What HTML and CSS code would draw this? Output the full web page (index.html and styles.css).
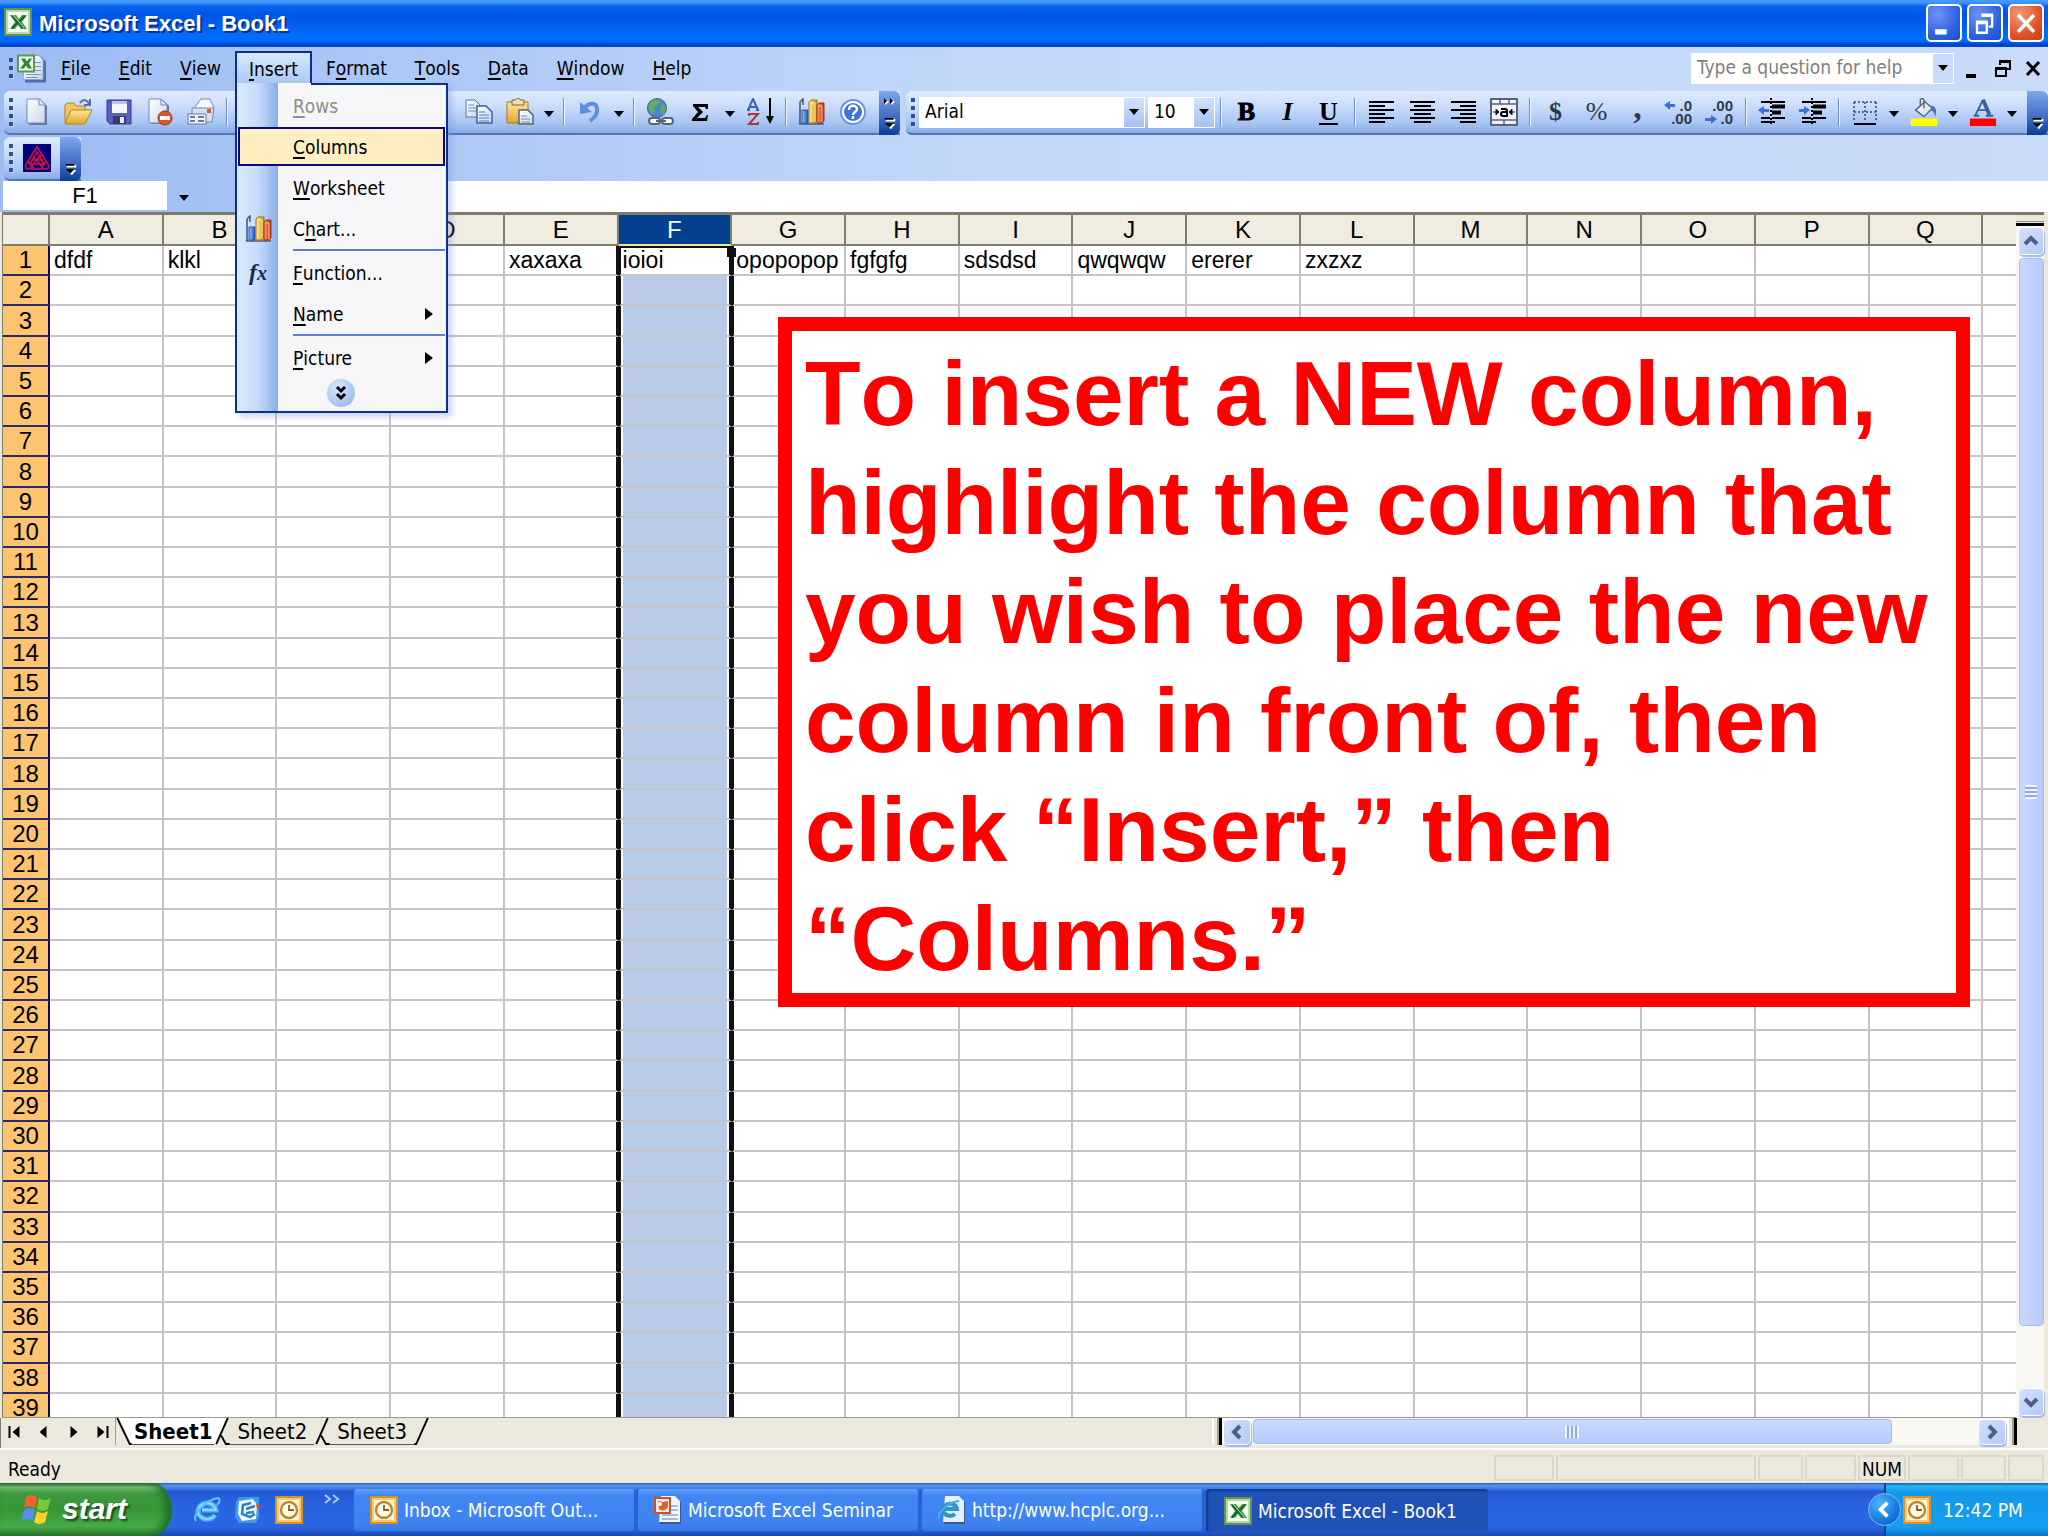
FILE: index.html
```html
<!DOCTYPE html>
<html lang="en">
<head>
    <meta charset="UTF-8">
    <meta name="viewport" content="width=device-width, initial-scale=1.0">
    <title>Microsoft Excel - Book1</title>
    <link rel="stylesheet" href="styles.css">
</head>
<body>
    <!-- shared icons -->
    <svg class="defs" width="0" height="0" aria-hidden="true">
        <defs>
            <linearGradient id="blueBar" x1="0" x2="1"><stop offset="0" stop-color="#9cc4ff"/><stop offset="1" stop-color="#1d50c8"/></linearGradient>
            <linearGradient id="goldBar" x1="0" x2="1"><stop offset="0" stop-color="#fff0a0"/><stop offset="1" stop-color="#d79a10"/></linearGradient>
            <linearGradient id="redBar" x1="0" x2="1"><stop offset="0" stop-color="#ff9a78"/><stop offset="1" stop-color="#c02c08"/></linearGradient>
            <linearGradient id="paper" x1="0" y1="0" x2="1" y2="1"><stop offset="0" stop-color="#fff"/><stop offset="1" stop-color="#c9d6ea"/></linearGradient>
            <linearGradient id="folder" x1="0" y1="0" x2="0" y2="1"><stop offset="0" stop-color="#ffe79a"/><stop offset="1" stop-color="#e2a52e"/></linearGradient>
        </defs>
        <symbol id="excel" viewBox="0 0 28 28">
            <rect x="1" y="1" width="26" height="26" fill="#f4fbf0" stroke="#5f9550" stroke-width="2"/>
            <rect x="3" y="3" width="22" height="22" fill="none" stroke="#b9d8ac" stroke-width="2"/>
            <path d="M6 7h6l3 4 3-4h5l-5 7 5 7h-6l-3-4-3 4H6l5-7z" fill="#3c9a45"/>
            <path d="M8 8l11 12M21 8L8 20" stroke="#12561d" stroke-width="1.5"/>
            <path d="M9 7l11 13" stroke="#bfe3b4" stroke-width="1"/>
        </symbol>
        <symbol id="chart" viewBox="0 0 28 28">
            <path d="M2 4v22h24M2 26l-1-1M2 4l3-3v6" fill="none" stroke="#4a5a7c" stroke-width="1.6"/>
            <path d="M4 12h6v13H4z" fill="url(#blueBar)" stroke="#2b52a8"/>
            <path d="M11 4l2-2h6v20l-2 3h-6z" fill="url(#goldBar)" stroke="#9c7416"/>
            <path d="M19 7l2-2h5v18l-2 2h-5z" fill="url(#redBar)" stroke="#a0300f"/>
            <path d="M12 5h5v19M20 8h4v16" fill="none" stroke="#ffe9b0" opacity=".7"/>
        </symbol>
        <symbol id="clock" viewBox="0 0 28 28">
            <rect x="1" y="1" width="26" height="26" fill="#fff3d2" stroke="#d9902a" stroke-width="2"/>
            <rect x="3" y="3" width="22" height="22" fill="none" stroke="#fbc86b" stroke-width="2"/>
            <circle cx="14" cy="14" r="8" fill="#fffbe9" stroke="#b98433" stroke-width="2.4"/>
            <path d="M14 9v5h5" fill="none" stroke="#8a6020" stroke-width="1.8"/>
        </symbol>
        <symbol id="ie" viewBox="0 0 28 28">
            <path d="M22 19a9 8 0 1 1 1-5H9" fill="none" stroke="#4fb6f5" stroke-width="5"/>
            <path d="M22 19a9 8 0 1 1 1-5H9" fill="none" stroke="#a7e0ff" stroke-width="1.4"/>
            <path d="M3 25C-1 19 12 4 25 2c3 1 1 5-1 7" fill="none" stroke="#5cc0fa" stroke-width="2.2"/>
        </symbol>
        <symbol id="more" viewBox="0 0 14 16">
            <path d="M2 2h11v3H2zM2 8h11l-5 6z" fill="#fff"/>
            <path d="M1 1h10v2H1zM1 7h10l-5 5z" fill="#000"/>
        </symbol>
    </svg>

    <header class="title-bar">
        <svg class="app-icon"><use href="#excel"/></svg>
        <h1>Microsoft Excel - Book1</h1>
        <div class="window-buttons">
            <button type="button" aria-label="Minimize"><svg viewBox="0 0 36 40"><path d="M8 27h13v6H8z" fill="#fff"/></svg></button>
            <button type="button" aria-label="Restore"><svg viewBox="0 0 36 40"><path d="M14 12h12v12h-4M14 10.500h13" fill="none" stroke="#fff" stroke-width="2.600"/><path d="M9 20h11v11H9zM8 18.500h13" fill="none" stroke="#fff" stroke-width="2.600"/></svg></button>
            <button type="button" class="close" aria-label="Close"><svg viewBox="0 0 36 40"><path d="M9 11l18 19M27 11L9 30" stroke="#fff" stroke-width="4"/></svg></button>
        </div>
    </header>

    <div class="bars">
        <nav class="menu-bar">
            <span class="grip short"></span>
            <svg class="doc-icon" viewBox="0 0 30 28">
                <path d="M10 2h14l5 5v21H8V10z" fill="#4d6ca8"/>
                <path d="M8 1h14l4 4v20H6z" fill="url(#paper)" stroke="#8ba3cf"/>
                <path d="M18 8h6M18 12h6M9 20h15M9 16h15M9 23h12" stroke="#7c97cd"/>
                <rect x="1" y="1" width="16" height="16" fill="#f1faed" stroke="#5f9550" stroke-width="2"/>
                <path d="M4 4h4l2 3 2-3h3l-3 5 3 5h-4l-2-3-2 3H3l4-5z" fill="#2f8a3a"/>
            </svg>
            <button type="button"><u>F</u>ile</button>
            <button type="button"><u>E</u>dit</button>
            <button type="button"><u>V</u>iew</button>
            <div class="menu-open">
                <button type="button" aria-expanded="true"><u>I</u>nsert</button>
                <ul class="dropdown">
                    <li><button type="button" disabled><u>R</u>ows</button></li>
                    <li><button type="button" class="active"><u>C</u>olumns</button></li>
                    <li><button type="button"><u>W</u>orksheet</button></li>
                    <li><button type="button"><svg class="item-icon"><use href="#chart"/></svg>C<u>h</u>art...</button></li>
                    <li class="divided"><button type="button"><span class="item-icon fx"><i>f</i><i>x</i></span><u>F</u>unction...</button></li>
                    <li><button type="button"><u>N</u>ame<span class="sub"></span></button></li>
                    <li class="divided"><button type="button"><u>P</u>icture<span class="sub"></span></button></li>
                    <li class="expand"><button type="button" aria-label="Show full menu"><svg viewBox="0 0 28 28"><path d="M10 8l4 4 4-4M10 15l4 4 4-4" fill="none" stroke="#000" stroke-width="3"/></svg></button></li>
                </ul>
            </div>
            <button type="button">F<u>o</u>rmat</button>
            <button type="button"><u>T</u>ools</button>
            <button type="button"><u>D</u>ata</button>
            <button type="button"><u>W</u>indow</button>
            <button type="button"><u>H</u>elp</button>
            <div class="combo help-box">
                <input type="text" placeholder="Type a question for help" aria-label="Type a question for help">
                <span class="combo-arrow"></span>
            </div>
            <div class="doc-buttons">
                <button type="button" aria-label="Minimize workbook"><svg viewBox="0 0 16 20"><path d="M1 16h10v4H1z"/></svg></button>
                <button type="button" aria-label="Restore workbook"><svg viewBox="0 0 16 20"><path d="M5 7V3h10v8h-4M5 4h10M1 10h10v8H1zM1 11h10" fill="none" stroke="#000" stroke-width="2"/></svg></button>
                <button type="button" aria-label="Close workbook"><svg viewBox="0 0 16 20"><path d="M2 4l12 13M14 4L2 17" stroke="#000" stroke-width="3"/></svg></button>
            </div>
        </nav>

        <div class="toolbar-row">
            <div class="toolbar standard">
                <span class="grip"></span>
                <button type="button" class="tool" aria-label="New"><svg viewBox="0 0 28 28"><path d="M6 2h12l6 6v19H6z" fill="#5f78a8"/><path d="M4 1h13l5 6v18H4z" fill="url(#paper)" stroke="#7489b4"/><path d="M16 1v6h6" fill="#dbe5f5" stroke="#7489b4"/></svg></button>
                <button type="button" class="tool" aria-label="Open"><svg viewBox="0 0 28 28"><path d="M1 25V7l2-2h7l2 3h9v5" fill="#f1c561" stroke="#b08323"/><path d="M1 26l6-14h21l-7 14z" fill="url(#folder)" stroke="#b08323"/><path d="M16 5c3-4 7-4 9 1M26 1v6h-6" fill="none" stroke="#55729f" stroke-width="2"/></svg></button>
                <button type="button" class="tool" aria-label="Save"><svg viewBox="0 0 28 28"><path d="M2 2h24v24H5l-3-3z" fill="#5a5fc0" stroke="#353a90"/><path d="M7 3h15v12H7z" fill="#f3f6ff"/><path d="M7 3h15v3H7z" fill="#b9c3ee"/><path d="M8 18h13v8H8z" fill="#34396f"/><path d="M15 19h4v6h-4z" fill="#e8ecff"/></svg></button>
                <button type="button" class="tool" aria-label="Permission"><svg viewBox="0 0 28 28"><path d="M5 2h12l6 6v18H5z" fill="#5f78a8"/><path d="M3 1h12l6 6v18H3z" fill="url(#paper)" stroke="#7489b4"/><path d="M15 1v6h6" fill="none" stroke="#7489b4"/><circle cx="19" cy="20" r="7" fill="#e2542c" stroke="#a8330f"/><path d="M14 18h10v4H14z" fill="#fff"/></svg></button>
                <button type="button" class="tool" aria-label="Print"><svg viewBox="0 0 28 28"><path d="M8 9l6-8h9l4 9" fill="#f6f9ff" stroke="#7489b4"/><path d="M5 10h22l-2 14H5z" fill="#d5dff0" stroke="#7489b4"/><path d="M20 11h4v4h-4z" fill="#e2542c"/><path d="M1 16h18v10H1z" fill="#f3f6fc" stroke="#5f78a8"/><path d="M3 19h5M3 23h5M11 19h6M11 23h6" stroke="#5f78a8" stroke-width="2"/></svg></button>
                <span class="sep"></span>
                <span class="stretch"></span>
                <button type="button" class="tool" aria-label="Copy"><svg viewBox="0 0 28 28"><path d="M1 2h9l5 5v12H1z" fill="url(#paper)" stroke="#5675b5"/><path d="M3 7h6M3 10h9M3 13h9" stroke="#6f90d0"/><path d="M12 8h9l6 6v11H12z" fill="url(#paper)" stroke="#3f5fa8" stroke-width="1.500"/><path d="M14 14h6M14 17h10M14 20h10M14 23h10" stroke="#5679c8"/></svg></button>
                <button type="button" class="tool" aria-label="Paste"><svg viewBox="0 0 28 28"><path d="M1 4h21v21H1z" fill="url(#folder)" stroke="#a1751b"/><path d="M6 2h3l3-2 3 2h3v5H6z" fill="#e9ddb0" stroke="#7d6a35"/><path d="M13 12h9l5 5v9H13z" fill="url(#paper)" stroke="#59647c" stroke-width="1.500"/><path d="M15 18h6M15 21h9M15 24h9" stroke="#7f8aa5"/></svg></button>
                <button type="button" class="arrow" aria-label="Paste options"></button>
                <span class="sep"></span>
                <button type="button" class="tool" aria-label="Undo"><svg viewBox="0 0 28 28"><path d="M9 9c5-5 11-4 12 1 1 6-2 9-7 13" fill="none" stroke="#5f8de0" stroke-width="4"/><path d="M4 4v12l12-2z" fill="#5f8de0"/></svg></button>
                <button type="button" class="arrow" aria-label="Undo list"></button>
                <span class="sep"></span>
                <button type="button" class="tool" aria-label="Insert Hyperlink"><svg viewBox="0 0 28 28"><circle cx="11" cy="10" r="9.500" fill="#4a85d8" stroke="#40608f"/><path d="M4 5c4-5 9-4 10-2l-3 5-4 1 2 5-3 2C2 13 2 8 4 5zM16 6l4 3-2 8-4-3z" fill="#62b04a"/><rect x="3" y="20" width="11" height="6" rx="3" fill="#fff" stroke="#596577" stroke-width="2"/><rect x="16" y="20" width="11" height="6" rx="3" fill="#fff" stroke="#596577" stroke-width="2"/><path d="M10 23h10" stroke="#596577" stroke-width="2"/></svg></button>
                <button type="button" class="tool" aria-label="AutoSum"><svg viewBox="0 0 28 28"><path d="M6 6h15v5h-2l-1-2h-7l5 5-6 6h8l2-3h1l-1 6H5v-2l6-7-5-6z"/></svg></button>
                <button type="button" class="arrow" aria-label="Functions"></button>
                <button type="button" class="tool" aria-label="Sort Ascending"><svg viewBox="0 0 28 28"><path d="M2 12L7 1l5 11M4 9h6M1 12h3M10 12h3" fill="none" stroke="#3c62b4" stroke-width="2"/><path d="M3 18v-2h9L3 26h9v-2" fill="none" stroke="#a83a3a" stroke-width="2"/><path d="M24 0v24" stroke="#000" stroke-width="2"/><path d="M20 18h8l-4 8z"/></svg></button>
                <span class="sep"></span>
                <button type="button" class="tool" aria-label="Chart Wizard"><svg><use href="#chart"/></svg></button>
                <button type="button" class="tool" aria-label="Help"><svg viewBox="0 0 28 28"><circle cx="14" cy="14" r="12" fill="#fff" stroke="#6b93dd" stroke-width="2"/><circle cx="14" cy="14" r="9" fill="#3b73dc"/><path d="M10 12c0-6 8-5 8-1 0 3-4 3-4 6M14 18v3" fill="none" stroke="#fff" stroke-width="2.500"/></svg></button>
                <button type="button" class="overflow" aria-label="More buttons"><svg class="push" viewBox="0 0 14 10"><path d="M2 1l4 3-4 3zM8 1l4 3-4 3z" fill="#fff"/><path d="M1 0l3 3-3 3zM7 0l3 3-3 3z"/></svg><svg><use href="#more"/></svg></button>
            </div>

            <div class="toolbar formatting">
                <span class="grip"></span>
                <div class="combo font-name">
                    <select aria-label="Font"><option>Arial</option></select>
                    <span class="combo-arrow"></span>
                </div>
                <div class="combo font-size">
                    <select aria-label="Font Size"><option>10</option></select>
                    <span class="combo-arrow"></span>
                </div>
                <span class="sep"></span>
                <button type="button" class="tool letter"><b>B</b></button>
                <button type="button" class="tool letter"><i>I</i></button>
                <button type="button" class="tool letter"><u>U</u></button>
                <span class="sep"></span>
                <button type="button" class="tool" aria-label="Align Left"><svg viewBox="0 0 28 28"><path d="M2 4h25M2 8h16M2 12h25M2 16h16M2 20h25M2 24h16" stroke="#000" stroke-width="2"/></svg></button>
                <button type="button" class="tool" aria-label="Center"><svg viewBox="0 0 28 28"><path d="M2 4h25M6 8h17M2 12h25M6 16h17M2 20h25M6 24h17" stroke="#000" stroke-width="2"/></svg></button>
                <button type="button" class="tool" aria-label="Align Right"><svg viewBox="0 0 28 28"><path d="M2 4h25M11 8h16M2 12h25M11 16h16M2 20h25M11 24h16" stroke="#000" stroke-width="2"/></svg></button>
                <button type="button" class="tool merge" aria-label="Merge and Center"><svg viewBox="0 0 28 28"><path d="M1 1h26v26H1z" fill="#eef3fb" stroke="#59647c" stroke-width="2"/><path d="M1 6h26M1 22h26M10 1v5M19 1v5M14 22v5" stroke="#59647c" stroke-width="1.500"/><path d="M3 14h5M20 14h5M6 11l3 3-3 3zM22 11l-3 3 3 3z" stroke="#222"/><path d="M11 11h4q2 0 2 2v5h-4q-2 0-2-2t2-2h4" fill="none" stroke="#000" stroke-width="2"/></svg></button>
                <span class="sep"></span>
                <button type="button" class="tool letter soft"><b>$</b></button>
                <button type="button" class="tool letter soft">%</button>
                <button type="button" class="tool letter soft comma"><b>,</b></button>
                <button type="button" class="tool decimals" aria-label="Increase Decimal"><svg viewBox="0 0 28 28"><path d="M0 7l6-4v3h5v3H6v3z" fill="#3f70d0"/></svg><span>.0</span><span>.00</span></button>
                <button type="button" class="tool decimals" aria-label="Decrease Decimal"><svg viewBox="0 0 28 28"><path d="M12 21l-6-4v3H0v3h6v3z" fill="#3f70d0"/></svg><span>.00</span><span>.0</span></button>
                <span class="sep"></span>
                <button type="button" class="tool" aria-label="Decrease Indent"><svg viewBox="0 0 28 28"><path d="M3 4h24M3 20h9M14 20h13M3 24h14" stroke="#000" stroke-width="2"/><path d="M14 8.500h13M14 14.500h9" stroke="#000" stroke-width="4"/><path d="M13 0v28" stroke="#000" stroke-width="2" stroke-dasharray="2 2"/><path d="M0 12l6-4v3h5v3H6v3z" fill="#3f70d0"/></svg></button>
                <button type="button" class="tool" aria-label="Increase Indent"><svg viewBox="0 0 28 28"><path d="M3 4h24M3 20h9M14 20h13M3 24h14" stroke="#000" stroke-width="2"/><path d="M14 8.500h13M14 14.500h9" stroke="#000" stroke-width="4"/><path d="M13 0v28" stroke="#000" stroke-width="2" stroke-dasharray="2 2"/><path d="M11 12L5 8v3H0v3h5v3z" fill="#3f70d0"/></svg></button>
                <span class="sep"></span>
                <button type="button" class="tool" aria-label="Borders"><svg viewBox="0 0 28 28"><path d="M3 4h22M3 14h22M3 4v20M14 4v20M25 4v20" fill="none" stroke="#37486d" stroke-width="1.500" stroke-dasharray="2 2"/><path d="M3 26h22" stroke="#000" stroke-width="2"/></svg></button>
                <button type="button" class="arrow" aria-label="Border styles"></button>
                <button type="button" class="tool" aria-label="Fill Color"><svg viewBox="0 0 28 30"><path d="M22 8c5 1 6 6 4 12-1-5-3-7-6-7z" fill="#4a72c4"/><path d="M5 13L15 4l8 7-9 9z" fill="url(#paper)" stroke="#59647c" stroke-width="1.500"/><path d="M10 8V2q2-3 4 0v9" fill="none" stroke="#59647c" stroke-width="1.500"/><path d="M0 22h28v8H0z" fill="#ff0"/></svg></button>
                <button type="button" class="arrow" aria-label="Fill colors"></button>
                <button type="button" class="tool" aria-label="Font Color"><svg viewBox="0 0 28 30"><path d="M6 18L14 2M4 19h6M17 19h8M9 13h9" fill="none" stroke="#3d5c9e" stroke-width="2"/><path d="M14 2l7 16" stroke="#3d5c9e" stroke-width="4"/><path d="M0 22h28v8H0z" fill="#f00"/></svg></button>
                <button type="button" class="arrow" aria-label="Font colors"></button>
                <button type="button" class="overflow" aria-label="Toolbar options"><svg><use href="#more"/></svg></button>
            </div>
        </div>

        <div class="toolbar-row addins">
            <div class="toolbar">
                <span class="grip"></span>
                <button type="button" class="tool" aria-label="PDF"><svg viewBox="0 0 28 28"><path d="M0 0h28v28H0z" fill="#00007c"/><path d="M14 3L3 20q-2 5 3 5h16q5 0 3-5zM14 8L7 20h14zM10 12l10 12M18 11L7 24M5 17l6 8M23 17l-5 8M8 16h12" fill="none" stroke="#d4103c" stroke-width="1.500"/></svg></button>
                <button type="button" class="overflow" aria-label="Toolbar options"><svg><use href="#more"/></svg></button>
            </div>
        </div>

        <div class="formula-row">
            <input class="name-box" type="text" value="F1" aria-label="Name Box">
            <button type="button" class="arrow" aria-label="Names"></button>
            <input class="formula" type="text" aria-label="Formula Bar">
        </div>
    </div>

    <main class="workbook">
        <div class="pane">
            <table class="sheet" id="sheet">
                <thead><tr id="columns"><th class="corner"></th></tr></thead>
                <tbody id="rows"></tbody>
            </table>
            <p class="callout">To insert a NEW column, highlight the column that you wish to place the new column in front of, then click “Insert,” then “Columns.”</p>
        </div>
        <div class="vscroll">
            <span class="split"></span>
            <button type="button" aria-label="Scroll up"><svg viewBox="0 0 24 26"><path d="M6 16l6-6 6 6" fill="none" stroke="#4d6185" stroke-width="4"/></svg></button>
            <span class="thumb"></span>
            <span class="track"></span>
            <button type="button" aria-label="Scroll down"><svg viewBox="0 0 24 26"><path d="M6 10l6 6 6-6" fill="none" stroke="#4d6185" stroke-width="4"/></svg></button>
        </div>
    </main>

    <div class="sheet-bar">
        <div class="sheet-nav">
            <button type="button" aria-label="First sheet"><svg viewBox="0 0 12 14"><path d="M0 1h2v12H0zM11 1v12L4 7z"/></svg></button>
            <button type="button" aria-label="Previous sheet"><svg viewBox="0 0 12 14"><path d="M9 1v12L2 7z"/></svg></button>
            <button type="button" aria-label="Next sheet"><svg viewBox="0 0 12 14"><path d="M3 1v12l7-6z"/></svg></button>
            <button type="button" aria-label="Last sheet"><svg viewBox="0 0 12 14"><path d="M10 1h2v12h-2zM1 1v12l7-6z"/></svg></button>
        </div>
        <div class="tabs">
            <svg class="slant" viewBox="0 0 16 28"><path d="M0 0h16v27h-2z" fill="#fff"/><path d="M1 0l13 27h2" fill="none" stroke="#000" stroke-width="2"/></svg>
            <button type="button" class="current">Sheet1</button>
            <svg class="slant" viewBox="0 0 16 28"><path d="M0 0h14L2 27H0z" fill="#fff"/><path d="M14 0L2 27M7 18l5 9h4" fill="none" stroke="#000" stroke-width="2"/></svg>
            <button type="button">Sheet2</button>
            <svg class="slant" viewBox="0 0 16 28"><path d="M14 0L2 27M7 18l5 9h4" fill="none" stroke="#000" stroke-width="2"/></svg>
            <button type="button">Sheet3</button>
            <svg class="slant" viewBox="0 0 16 28"><path d="M14 0L2 27H0" fill="none" stroke="#000" stroke-width="2"/></svg>
        </div>
        <span class="tab-split"></span>
        <div class="hscroll">
            <button type="button" aria-label="Scroll left"><svg viewBox="0 0 26 24"><path d="M16 6l-6 6 6 6" fill="none" stroke="#4d6185" stroke-width="4"/></svg></button>
            <span class="thumb"></span>
            <span class="track"></span>
            <button type="button" aria-label="Scroll right"><svg viewBox="0 0 26 24"><path d="M10 6l6 6-6 6" fill="none" stroke="#4d6185" stroke-width="4"/></svg></button>
        </div>
        <span class="tab-split"></span>
    </div>

    <div class="status-bar">
        <span class="message">Ready</span>
        <span class="cell w60"></span>
        <span class="cell w200"></span>
        <span class="cell w44"></span>
        <span class="cell w52"></span>
        <span class="cell w48">NUM</span>
        <span class="cell w52"></span>
        <span class="cell w44"></span>
        <span class="cell w36"></span>
    </div>

    <footer class="taskbar">
        <button type="button" class="start">
            <svg viewBox="0 0 32 32"><path d="M5 4q6-4 11 0l-2 11Q8 11 3 15z" fill="#f0642a"/><path d="M18 5q6 4 12 0l-3 11q-5 4-11 0z" fill="#7cc63a"/><path d="M3 17q5-4 11 0l-3 11q-5-4-11 0z" fill="#5a8cf0"/><path d="M16 18q5 4 11 0l-3 11q-5 4-11 0z" fill="#fbd02c"/></svg>
            start
        </button>
        <div class="quick">
            <button type="button" aria-label="Internet Explorer"><svg><use href="#ie"/></svg></button>
            <button type="button" aria-label="Show Desktop"><svg viewBox="0 0 28 28"><path d="M2 6l3-5h20v20l-3 6H5l-4-6z" fill="#3f9ae8"/><path d="M5 5l14-2 4 6-1 14-14 2-4-7z" fill="#f3faff"/><path d="M17 7l-8 2-1 9 8 3 5-3M12 13l9-3M12 17l8-1" fill="none" stroke="#2c7fd0" stroke-width="2.500"/><path d="M22 8l6 2-5 3z" fill="#e2442c"/></svg></button>
            <button type="button" aria-label="Microsoft Outlook"><svg><use href="#clock"/></svg></button>
            <button type="button" class="quick-more" aria-label="More shortcuts"><svg viewBox="0 0 16 12"><path d="M1 1l5 4-5 4M9 1l5 4-5 4" fill="none" stroke="#a9cdfc" stroke-width="2"/></svg></button>
        </div>
        <div class="tasks">
            <button type="button"><svg><use href="#clock"/></svg>Inbox - Microsoft Out...</button>
            <button type="button"><svg viewBox="0 0 28 28"><path d="M8 1h14l5 5v22H6V8z" fill="#34588f"/><path d="M7 0h14l5 5v21H5z" fill="#f1f6ff"/><path d="M17 10h7M17 14h7M8 19h16M8 23h16" stroke="#8ca9d8" stroke-width="1.500"/><rect x="1" y="2" width="15" height="15" fill="#fbe6da" stroke="#c2542c" stroke-width="2"/><path d="M4 5l5 1 5-1v6q-4 6-9 2z" fill="#d9633a"/><circle cx="6" cy="8" r="2" fill="#fff"/></svg>Microsoft Excel Seminar</button>
            <button type="button"><svg viewBox="0 0 28 28"><path d="M8 1h14l5 5v22H6z" fill="#34588f"/><path d="M7 0h14l5 5v21H5z" fill="#e6effc"/><path d="M17 18a7 6 0 1 1 2-5H6" fill="none" stroke="#2b95cc" stroke-width="4"/><path d="M1 23C-1 18 9 6 21 5" fill="none" stroke="#43aee2" stroke-width="2"/></svg>http://www.hcplc.org...</button>
            <button type="button" class="pressed"><svg><use href="#excel"/></svg>Microsoft Excel - Book1</button>
        </div>
        <div class="tray">
            <button type="button" class="tray-toggle" aria-label="Show hidden icons"><svg viewBox="0 0 32 32"><path d="M19 9l-7 7 7 7" fill="none" stroke="#fff" stroke-width="4"/></svg></button>
            <svg class="tray-icon"><use href="#clock"/></svg>
            <time>12:42 PM</time>
        </div>
    </footer>

    <script src="script.js"></script>
</body>
</html>
```

FILE: script.js
```js
const columns = "ABCDEFGHIJKLMNOPQR".split("");
const selected = "F";
const rowCount = 39;

const firstRow = {
    A: "dfdf",
    B: "klkl",
    E: "xaxaxa",
    F: "ioioi",
    G: "opopopop",
    H: "fgfgfg",
    I: "sdsdsd",
    J: "qwqwqw",
    K: "ererer",
    L: "zxzxz"
};

const head = document.getElementById("columns");
const body = document.getElementById("rows");

columns.forEach(function (name) {
    const th = document.createElement("th");
    th.scope = "col";
    // column R is only partly in view, its letter is scrolled off
    th.textContent = name === "R" ? "" : name;
    if (name === selected) {
        th.className = "selected";
    }
    head.appendChild(th);
});

for (let i = 1; i <= rowCount; i++) {
    const tr = document.createElement("tr");
    const th = document.createElement("th");
    th.scope = "row";
    th.textContent = i;
    tr.appendChild(th);

    columns.forEach(function (name) {
        const td = document.createElement("td");
        if (i === 1 && firstRow[name]) {
            td.textContent = firstRow[name];
        }
        if (name === "E") {
            td.className = "before";
        } else if (name === selected) {
            td.className = "selected";
        } else if (name === "G") {
            td.className = "after";
        }
        tr.appendChild(td);
    });
    body.appendChild(tr);
}
```

FILE: styles.css
```css
* {
    box-sizing: border-box;
}

body {
    display: flex;
    flex-direction: column;
    height: 100vh;
    margin: 0;
    overflow: hidden;
    background: #ece9d8;
    color: #000;
    font-family: "DejaVu Sans Condensed", "DejaVu Sans", sans-serif;
    font-size: 19px;
}

button,
input,
select {
    margin: 0;
    padding: 0;
    border: 0;
    border-radius: 0;
    background: none;
    color: inherit;
    font: inherit;
}

button {
    display: flex;
    align-items: center;
    justify-content: center;
}

svg {
    display: block;
    flex: none;
    width: 28px;
    height: 28px;
}

.defs {
    position: absolute;
    width: 0;
    height: 0;
}

u {
    text-underline-offset: 3px;
    text-decoration-thickness: 2px;
}

/* title bar */
.title-bar {
    display: flex;
    flex: none;
    align-items: center;
    height: 47px;
    padding: 0 4px;
    background: linear-gradient(#4a9cfd 0, #3b92fc 3px, #0a62f2 6px, #0056e4 14px, #005cee 24px, #006eff 36px, #006aff 41px, #0042c8 45px, #0a4cc0 47px);
}

.app-icon {
    margin-bottom: 4px;
}

.title-bar h1 {
    flex: 1;
    margin: 0 0 0 7px;
    color: #fff;
    font: bold 22px "Liberation Sans", Arial, sans-serif;
    text-shadow: 2px 2px 0 #0a2f93;
}

.window-buttons {
    display: flex;
    gap: 5px;
    margin-bottom: 2px;
}

.window-buttons button {
    width: 36px;
    height: 38px;
    border: 2px solid #fff;
    border-radius: 5px;
    background: radial-gradient(circle at 30% 25%, #6f94f4, #2f62e4 60%, #1b4bd0);
}

.window-buttons svg {
    width: 32px;
    height: 36px;
}

.window-buttons .close {
    background: radial-gradient(circle at 30% 25%, #f09a7c, #e0532c 60%, #c63c12);
}

/* menu and toolbars */
.bars {
    flex: none;
    background: linear-gradient(to right, #9dbcf3, #c4d9fa 50%, #cadbf9);
}

.menu-bar {
    display: flex;
    align-items: center;
    height: 44px;
    padding: 0 6px 2px 9px;
}

.menu-bar > button,
.menu-open > button {
    height: 34px;
    padding: 0 14px;
    line-height: 34px;
}

.grip {
    flex: none;
    width: 4px;
    height: 28px;
    margin: 0 3px 0 5px;
    background: repeating-linear-gradient(#35508f 0 4px, #ffffff00 4px 8px);
    box-shadow: 1px 1px 0 #ffffff55;
}

.grip.short {
    height: 20px;
    margin: 0 4px 0 0;
}

.doc-icon {
    width: 30px;
    height: 29px;
}

.menu-open {
    position: relative;
    height: 34px;
}

.menu-open > button {
    border: 2px solid #0a2f93;
    border-bottom: 0;
    padding: 0 12px;
    background: linear-gradient(#d9e8fd, #a9c6f5);
}

.dropdown {
    position: absolute;
    z-index: 3;
    top: 32px;
    left: 0;
    width: 213px;
    margin: 0;
    padding: 2px 1px 3px;
    border: 2px solid #0a2f93;
    border-top: 0;
    background: linear-gradient(to right, #dceafe, #c5dafa 22px, #88ade8 41px, #f6f6f8 41px);
    box-shadow: 4px 4px 6px #7f97d866;
    list-style: none;
}

/* top edge of the menu, to the right of the open button */
.dropdown::before {
    content: "";
    position: absolute;
    top: 0;
    right: 0;
    left: 74px;
    height: 2px;
    background: #0a2f93;
}

.dropdown li {
    padding: 1px 0;
}

.dropdown button {
    position: relative;
    justify-content: flex-start;
    width: 100%;
    height: 39px;
    padding-left: 55px;
}

.dropdown button:disabled {
    color: #8d8d8d;
}

.dropdown button.active {
    padding-left: 53px;
    border: 2px solid #0a0a80;
    background: #ffeec2;
}

.item-icon {
    position: absolute;
    left: 7px;
}

.fx {
    left: 11px;
    color: #1f2a44;
    font: italic bold 24px "Liberation Serif", serif;
}

.fx i + i {
    font-size: 20px;
}

.sub {
    margin: 0 12px 0 auto;
    border: 6px solid transparent;
    border-right: 0;
    border-left: 8px solid #000;
}

.dropdown .divided {
    padding-top: 4px;
    background: linear-gradient(#5c80c6, #5c80c6) 55px 0 / 100% 2px no-repeat;
}

.dropdown .expand button {
    width: 28px;
    height: 28px;
    margin: 0 auto;
    padding: 0;
    border-radius: 50%;
    background: radial-gradient(circle at 35% 30%, #d6e6fd, #8db2ec);
}

.combo {
    position: relative;
    display: flex;
    align-items: center;
    height: 31px;
    padding: 1px;
    background: #fff;
}

.combo input,
.combo select {
    width: 100%;
    height: 100%;
    padding: 0 24px 2px 5px;
    appearance: none;
    outline: 0;
}

.combo input::placeholder {
    color: #7f7f7f;
    opacity: 1;
}

.combo-arrow {
    position: absolute;
    top: 1px;
    right: 1px;
    bottom: 1px;
    display: flex;
    align-items: center;
    justify-content: center;
    width: 20px;
    background: linear-gradient(#d3e2fb, #a5c2f0);
    pointer-events: none;
}

.combo-arrow::after,
.arrow::after {
    content: "";
    border: 5px solid transparent;
    border-top: 6px solid #000;
    border-bottom: 0;
}

.help-box {
    width: 263px;
    margin-left: auto;
}

.help-box input {
    padding-right: 20px;
}

.help-box .combo-arrow {
    background: #c9dbf9;
}

.doc-buttons {
    display: flex;
    gap: 12px;
    margin-left: 10px;
}

.doc-buttons svg {
    width: 18px;
    height: 20px;
}

.toolbar-row {
    display: flex;
    gap: 6px;
    padding-left: 4px;
}

.toolbar {
    display: flex;
    align-items: center;
    height: 44px;
    border-bottom: 2px solid #5474b2;
    border-radius: 6px 0 0 6px;
    background: linear-gradient(#dfebfd, #cbddfa 35%, #a9c5f3 75%, #89abe6);
}

.standard {
    flex: none;
    width: 896px;
}

.standard .overflow {
    margin-left: 6px;
}

.formatting {
    flex: 1;
}

.stretch {
    flex: 1;
}

.tool {
    flex: none;
    width: 41px;
    height: 40px;
}

.tool.letter {
    font: 26px "Liberation Serif", serif;
}

.tool.letter b {
    -webkit-text-stroke: 1px #000;
}

.tool.letter i,
.tool.letter u {
    font-weight: bold;
}

.tool.letter.soft {
    color: #30384a;
}

.tool.letter.soft b {
    -webkit-text-stroke: 0;
}

.tool.comma {
    padding-bottom: 10px;
    font-size: 34px;
}

.decimals {
    position: relative;
    flex-direction: column;
    align-items: flex-end;
    padding-right: 7px;
    color: #30384a;
    font: bold 15px/13px "Liberation Sans", Arial, sans-serif;
}

.decimals svg {
    position: absolute;
    top: 6px;
    left: 6px;
}

.arrow {
    flex: none;
    width: 18px;
    height: 40px;
    padding-top: 3px;
}

.sep {
    flex: none;
    width: 2px;
    height: 28px;
    margin: 0 4px 0 5px;
    border-left: 1px solid #6d90cf;
    background: #f2f7ff;
}

.overflow {
    flex: none;
    flex-direction: column;
    align-self: stretch;
    justify-content: flex-end;
    gap: 9px;
    width: 21px;
    height: 44px;
    margin-left: auto;
    padding-bottom: 4px;
    border-radius: 0 6px 6px 0;
    background: linear-gradient(#7ea6ee, #3f6dc4 60%, #0d3c96);
}

.overflow svg {
    width: 14px;
    height: 14px;
}

.overflow .push {
    height: 10px;
}

.font-name {
    width: 226px;
    margin: 0 3px 0 1px;
}

.font-size {
    width: 67px;
}

.addins {
    padding-top: 2px;
}

.addins .overflow {
    margin-left: 3px;
}

.formula-row {
    display: flex;
    height: 31px;
    padding-left: 3px;
}

.name-box {
    width: 164px;
    height: 29px;
    background: #fff;
    font: 22px "Liberation Sans", Arial, sans-serif;
    text-align: center;
}

.formula-row .arrow {
    width: 34px;
    height: 30px;
}

.formula {
    flex: 1;
    margin-left: 100px;
    background: #fff;
}

/* worksheet */
.workbook {
    display: flex;
    flex: 1;
    min-height: 0;
    padding: 0 4px 0 2px;
}

.pane {
    position: relative;
    flex: 1;
    overflow: hidden;
    border-top: 3px solid #7e7b6c;
    border-left: 1px solid #7e7b6c;
    border-bottom: 1px solid #9c998a;
    background: #fff;
}

.sheet {
    width: calc(100% + 81px);
    height: calc(100% + 7px);
    table-layout: fixed;
    border-collapse: separate;
    border-spacing: 0;
    font: 23px/22px "Liberation Sans", Arial, sans-serif;
}

.sheet th,
.sheet td {
    overflow: hidden;
    padding: 0;
    font-weight: normal;
    white-space: nowrap;
}

.sheet thead th {
    height: 31px;
    border-right: 2px solid #817d6d;
    border-bottom: 2px solid #817d6d;
    background: #f0ece0;
    font-size: 24px;
    line-height: 28px;
}

.sheet thead .corner {
    width: 47px;
}

.sheet thead .selected {
    border-bottom-color: #e8e79a;
    background: #00408f;
    color: #fff;
}

.sheet tbody th {
    border-right: 2px solid #0a0a70;
    border-bottom: 2px solid #2a2a6c;
    background: #fdc470;
    font-size: 24px;
}

.sheet td {
    padding-left: 4px;
    border-right: 2px solid #c6c4c4;
    border-bottom: 2px solid #c6c4c4;
}

.sheet .before {
    border-right: 3px solid #111;
}

.sheet td.selected {
    border-right: 3px solid #111;
    border-left: 2px solid #111;
    background: #bacbe9;
    box-shadow: inset 2px 0 #fff, inset -2px 0 #fff;
}

.sheet .after {
    padding-left: 2px;
    border-left: 2px solid #111;
}

.sheet tbody tr:first-child td.selected {
    padding-left: 2px;
    background: linear-gradient(#111, #111) 100% 2px / 2px 9px no-repeat #fff;
    box-shadow: inset 0 2px #111;
}

/* fill handle */
.sheet tbody tr:first-child .after {
    background: linear-gradient(#111, #111) 0 2px / 2px 9px no-repeat;
}

.callout {
    position: absolute;
    top: 102px;
    right: 46px;
    left: 775px;
    margin: 0;
    padding: 8px 0 0 13px;
    border: 14px solid #f00;
    background: #fff;
    color: #f00;
    font: bold 91px/109px "Liberation Sans", Arial, sans-serif;
    font-kerning: none;
}

/* scroll bars */
.vscroll {
    display: flex;
    flex: none;
    flex-direction: column;
    align-items: center;
    width: 28px;
    padding-left: 2px;
    border-top: 3px solid #7e7b6c;
    background: #f8f7f3;
}

.split {
    align-self: stretch;
    height: 11px;
    margin: 0 0 2px -2px;
    border-bottom: 3px solid #000;
    background: linear-gradient(#ece9d8 6px, #8f8b7b 6px 7px, #ece9d8 7px);
}

.vscroll button,
.hscroll button {
    flex: none;
    border-radius: 4px;
    background: linear-gradient(135deg, #d5e1fd, #b5c8f8);
    box-shadow: 0 0 0 1px #fff, 1px 2px 1px 1px #9db8e8;
}

.vscroll button {
    width: 24px;
    height: 26px;
}

.vscroll button svg {
    width: 24px;
    height: 26px;
}

.thumb {
    border: 1px solid #a6bdf2;
    border-radius: 4px;
}

.vscroll .thumb {
    flex: 1072;
    width: 25px;
    margin-top: 4px;
    background:
        repeating-linear-gradient(#eef3ff 0 2px, #8fabea 2px 4px) center / 12px 14px no-repeat,
        linear-gradient(to right, #cbd9fe, #b7cafa);
}

.vscroll .track {
    flex: 63;
}

.vscroll button:last-child {
    margin-bottom: 3px;
}

.hscroll {
    display: flex;
    flex: 783;
    align-items: center;
    padding: 0 2px;
    background: #f8f7f3;
}

.hscroll button,
.hscroll button svg {
    width: 26px;
    height: 24px;
}

.hscroll .thumb {
    flex: 636;
    height: 25px;
    margin-left: 3px;
    background:
        repeating-linear-gradient(to right, #eef3ff 0 2px, #8fabea 2px 4px) center / 14px 12px no-repeat,
        linear-gradient(#cbd9fe, #b7cafa);
}

.hscroll .track {
    flex: 87;
}

/* sheet tabs */
.sheet-bar {
    display: flex;
    flex: none;
    height: 30px;
    padding: 0 31px 3px 2px;
    border-left: 1px solid #7e7b6c;
    background: #ebe9dc;
}

.sheet-nav {
    display: flex;
    align-items: center;
    justify-content: space-between;
    width: 113px;
    padding: 0 6px 0 5px;
    border-right: 1px solid #a19e8f;
}

.sheet-nav svg {
    width: 13px;
    height: 14px;
}

.tabs {
    display: flex;
    flex: 1098;
    font-size: 22px;
}

.tabs button {
    padding: 0 7px;
    box-shadow: inset 0 -1px #55534a;
}

.tabs .current {
    padding: 0 2px;
    background: #fff;
    font-weight: bold;
}

.slant {
    width: 16px;
    height: 27px;
}

.tab-split {
    flex: none;
    width: 10px;
    border-right: 3px solid #000;
    background: linear-gradient(to right, #fff 2px, #ebe9dc 2px 5px, #a19e8f 5px);
}

/* status bar */
.status-bar {
    display: flex;
    flex: none;
    gap: 2px;
    height: 35px;
    padding: 5px 4px 2px 8px;
    border-top: 2px solid #fff;
    background: #ece9dc;
}

.message {
    flex: 1;
    line-height: 28px;
}

.cell {
    border: 2px solid #dad7cb;
    line-height: 25px;
    text-align: center;
}

.w36 { width: 36px; }
.w44 { width: 45px; }
.w48 { width: 48px; }
.w52 { width: 51px; }
.w60 { width: 60px; }
.w200 { width: 200px; }

/* taskbar */
.taskbar {
    display: flex;
    flex: none;
    height: 53px;
    background: linear-gradient(#1f4fae 0, #4b93f0 2px, #4187ea 5px, #2659d6 8px, #2963e0 24px, #2a66e4 44px, #1a47b4 53px);
    color: #fff;
}

.start {
    gap: 9px;
    width: 172px;
    padding: 0 24px 2px 0;
    border-radius: 0 22px 22px 0 / 0 30px 30px 0;
    background: linear-gradient(#2b6f35 0, #7fc37b 4px, #3f9a41 10px, #389638 26px, #46ab46 44px, #2b7a30 53px);
    box-shadow: inset -6px 0 8px #1f6b26;
    font: italic bold 30px "Liberation Sans", Arial, sans-serif;
    text-shadow: 2px 2px 2px #1c4a1c;
}

.start svg {
    width: 32px;
    height: 32px;
}

.quick {
    display: flex;
    align-items: center;
    gap: 13px;
    width: 182px;
    padding: 0 0 0 21px;
}

.quick .quick-more {
    align-self: flex-start;
    margin: 11px 0 0 8px;
}

.quick-more svg {
    width: 16px;
    height: 12px;
}

.tasks {
    display: flex;
    flex: 1;
    gap: 2px;
    padding: 6px 0 4px;
}

.tasks button {
    flex: 0 1 282px;
    justify-content: flex-start;
    gap: 6px;
    padding: 0 0 2px 16px;
    border-radius: 4px;
    background: linear-gradient(#6aa2fb 0, #4186f3 6px, #3f83f2 34px, #3577e4);
    box-shadow: inset -2px -1px 1px #2a62cc;
    white-space: nowrap;
}

.tasks .pressed {
    padding: 0 0 0 18px;
    background: #1e52b7;
    box-shadow: inset 2px 2px 2px #133a8c;
}

.tray {
    display: flex;
    align-items: center;
    width: 164px;
    border-left: 2px solid #0b3f9c;
    background: linear-gradient(#0f5cc0 0, #22b3f4 3px, #1497e8 10px, #12a0f2 44px, #0d76c8 53px);
}

.tray-toggle {
    flex: none;
    margin-left: -18px;
    border: 1px solid #8ab6e0;
    border-radius: 50%;
    background: radial-gradient(circle at 35% 30%, #4fb4ff, #0a6fdc 70%, #0a50a8);
}

.tray-toggle svg {
    width: 31px;
    height: 31px;
}

.tray-icon {
    margin: 0 12px 0 2px;
}
```
